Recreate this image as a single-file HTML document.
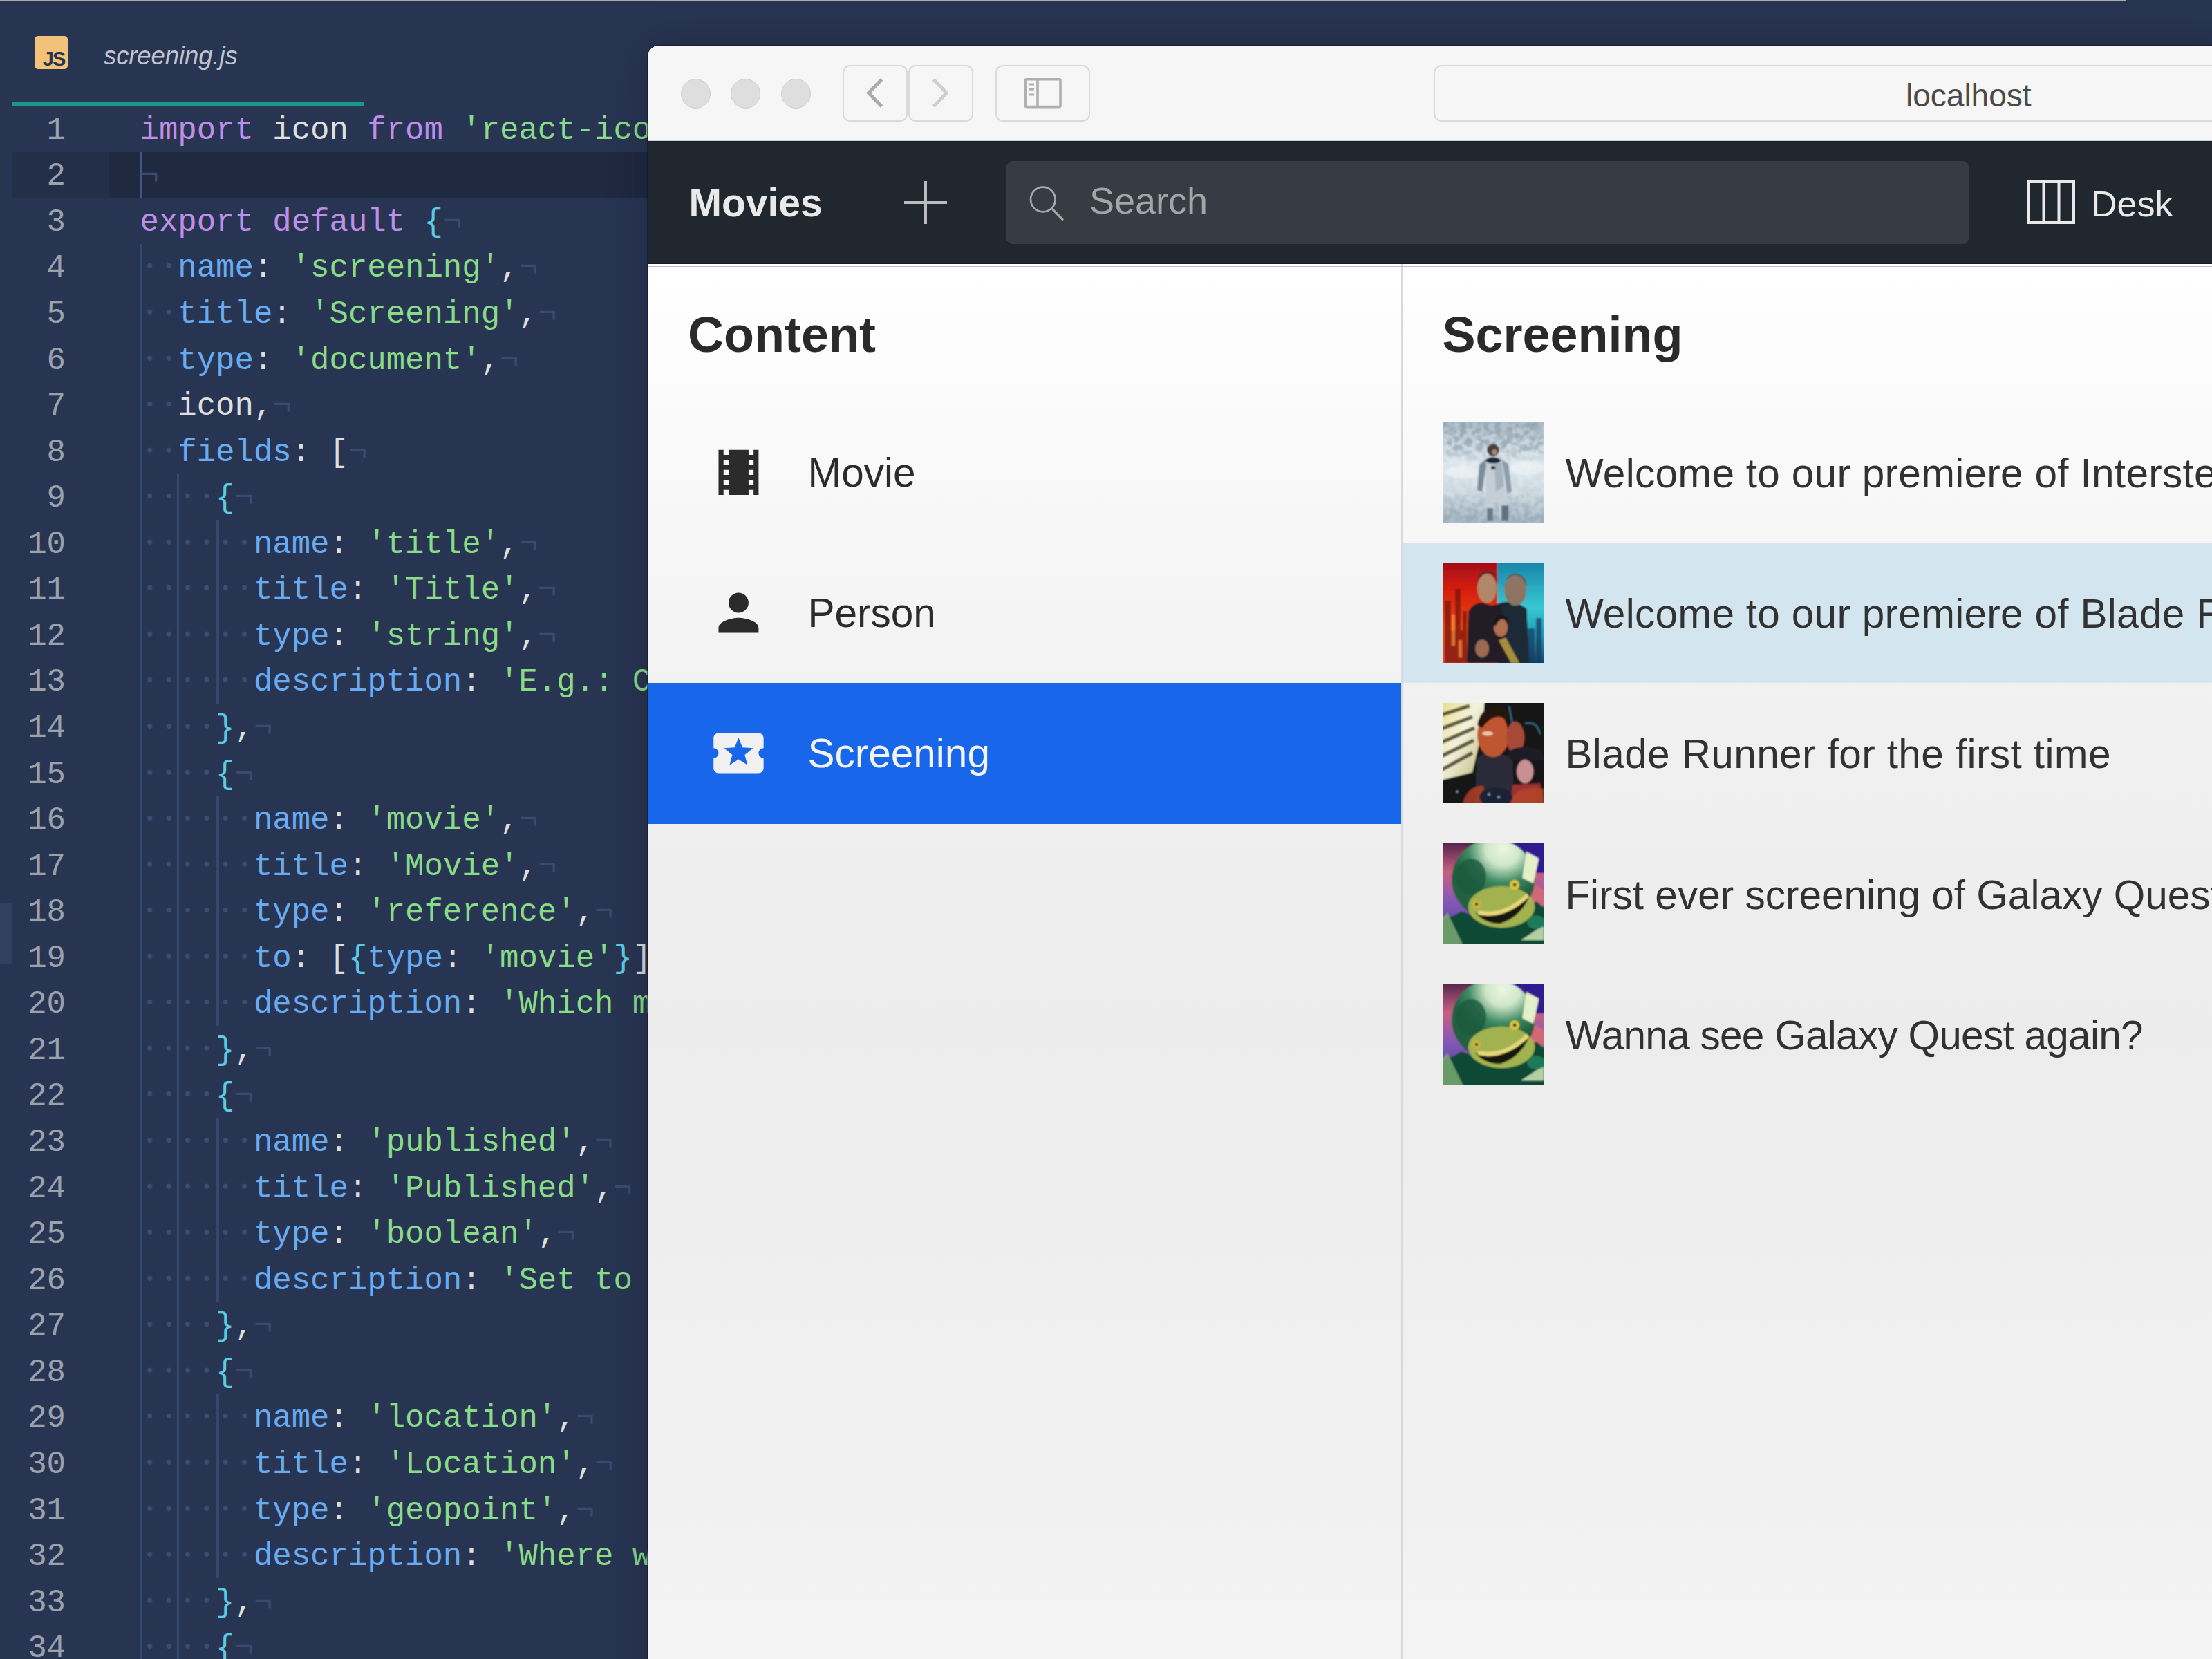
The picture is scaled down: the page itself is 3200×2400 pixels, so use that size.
<!DOCTYPE html>
<html><head><meta charset="utf-8">
<style>
html,body{margin:0;padding:0;}
body{width:3200px;height:2400px;overflow:hidden;position:relative;background:#283552;font-family:"Liberation Sans",sans-serif;}
.abs{position:absolute;}
#topstrip{position:absolute;left:0;top:0;width:3075px;height:1.2px;background:#a9abae;}
#jsicon{position:absolute;left:50px;top:52px;width:48px;height:48px;background:#f2c27b;border-radius:5px;}
#jsicon span{position:absolute;right:4.5px;bottom:0.5px;font:bold 29px/30px "Liberation Sans",sans-serif;color:#27344f;letter-spacing:-1.8px;}
#fname{position:absolute;left:150px;top:56px;font:italic 36.5px/50px "Liberation Sans",sans-serif;color:#bfc4ce;letter-spacing:-0.1px;}
#tabline{position:absolute;left:18px;top:147px;width:508px;height:7px;background:#18978a;}
#hl{position:absolute;left:18px;top:219.66px;width:920px;height:66.56px;background:#1f2940;}
#hlg{position:absolute;left:18px;top:219.66px;width:140px;height:66.56px;background:#232e47;}
#gmark{position:absolute;left:0;top:1306px;width:18px;height:89px;background:#323f5e;}
.ln{position:absolute;left:0;height:66.56px;width:940px;white-space:pre;}
.num{position:absolute;left:0;width:95px;text-align:right;font:45.66px/66.56px "Liberation Mono",monospace;color:#9aa1ad;}
.code{position:absolute;left:202.5px;font:45.66px/66.56px "Liberation Mono",monospace;color:#e6e6e6;}
.code i{font-style:normal;color:#3a4b70;}
.dots{position:absolute;left:0;top:0;height:66.56px;background:radial-gradient(circle at 13.7px 29.1px,#3a4d75 3.2px,rgba(58,77,117,0) 3.9px) 0 0/27.4px 66.56px repeat-x;}
.p{color:#c08de8;} .w{color:#dedede;} .g{color:#8adb88;} .b{color:#69abf0;} .c{color:#5ccbe2;}
.guide{position:absolute;width:3.4px;background:#35476c;}
#cursor{position:absolute;left:202.3px;top:219.66px;width:3px;height:66.56px;background:#3e5585;}
#editor{position:absolute;left:0;top:0;width:938px;height:2400px;overflow:hidden;}

#win{position:absolute;left:937px;top:65.5px;width:2300px;height:2400px;background:#f6f6f6;border-top-left-radius:16px;overflow:hidden;box-shadow:0 0 0 1px rgba(12,18,38,0.55),0 0 60px rgba(8,12,25,0.28);}
#toolbar{position:absolute;left:0;top:0;width:100%;height:137px;background:#f6f6f6;border-bottom:1.5px solid #d3d3d3;box-shadow:inset 0 1px 0 #ffffff;border-top-left-radius:16px;}
.tl{position:absolute;top:48px;width:41px;height:41px;border-radius:50%;background:#dedede;border:1px solid #cecece;}
.tbtn{position:absolute;top:28px;height:82px;border:2px solid #dadada;border-radius:11px;background:#f6f6f6;box-sizing:border-box;}
#url{position:absolute;left:1137px;top:28px;width:1300px;height:82px;border:2px solid #dadada;border-radius:12px;box-sizing:border-box;}
#url span{position:absolute;left:681px;top:19.5px;font:46px/46px "Liberation Sans",sans-serif;color:#4a4a4a;}
#nav{position:absolute;left:0;top:138.5px;width:100%;height:176px;background:#20272e;border-top:1px solid #141c22;border-bottom:1px solid #141c22;}
#movies{position:absolute;left:59.5px;top:56px;font:bold 57px/64px "Liberation Sans",sans-serif;color:#e9e9e9;}
#plus1{position:absolute;left:371px;top:85.6px;width:62px;height:4px;background:#babdbf;}
#plus2{position:absolute;left:400px;top:56.8px;width:3.8px;height:62px;background:#babdbf;}
#search{position:absolute;left:518px;top:28px;width:1394px;height:120px;background:#363c44;border-radius:11px;}
#search span{position:absolute;left:121px;top:25px;font:54px/64px "Liberation Sans",sans-serif;color:#a1a5a9;}
#desk{position:absolute;left:2088px;top:58px;font:52px/64px "Liberation Sans",sans-serif;color:#e9e9e9;}

#panels{position:absolute;left:0;top:316.5px;width:100%;height:2100px;}
#lp{position:absolute;left:0;top:0;width:1090px;height:2100px;background:linear-gradient(#ffffff 0px,#f0f0f0 700px,#ececec 1100px,#f3f3f3 2016px);}
#rp{position:absolute;left:1093.4px;top:0;width:1300px;height:2100px;background:linear-gradient(#ffffff 0px,#f0f0f0 700px,#ececec 1100px,#f3f3f3 2016px);}
#divider{position:absolute;left:1090px;top:0;width:3.4px;height:2100px;background:#d9d9d9;}
#shadowline{position:absolute;left:0;top:2.5px;width:100%;height:1.5px;background:#bdbdbd;}
.h1{position:absolute;top:62px;font:bold 72px/80px "Liberation Sans",sans-serif;color:#2a2a2a;}
.lrow,.rrow{position:absolute;left:0;width:100%;height:203.20px;}
.lrow.sel{background:#1867ea;}
.rrow.sel{background:#d3e5ef;}
.ico{position:absolute;left:87.7px;top:57.6px;width:86.9px;height:86.9px;fill:#2b2b2b;}
.sel .ico{fill:#f0f0f0;}
.ltext{position:absolute;left:231.5px;top:62px;font:58.5px/80px "Liberation Sans",sans-serif;color:#2c2c2c;white-space:nowrap;}
.sel .ltext{color:#f3f3f3;}
.thumb{position:absolute;left:57.5px;top:28.7px;width:145.2px;height:145.2px;overflow:hidden;}
.rtext{position:absolute;left:234px;top:63px;font:58.5px/80px "Liberation Sans",sans-serif;color:#323232;white-space:nowrap;}
.th1{background:linear-gradient(#c9d2da,#dfe5ea 40%,#b8c4cc);}
.th2{background:linear-gradient(90deg,#c0361c,#3a2a2a 45%,#1f5a6a 65%,#2aa0b8);}
.th3{background:linear-gradient(135deg,#e8d870,#3a3028 40%,#2a2020 70%,#c05030);}
.th4{background:linear-gradient(#6a5aa0,#6a9a60 40%,#404a30);}
</style></head><body>
<div id="editor">
<div id="topstrip"></div>
<div id="jsicon"><span>JS</span></div>
<div id="fname">screening.js</div>
<div id="tabline"></div>
<div id="hl"></div><div id="hlg"></div>
<div id="gmark"></div>
<div class="guide" style="left:202.3px;top:352.8px;height:2063.4px"></div><div class="guide" style="left:256.1px;top:685.6px;height:1730.6px"></div><div class="guide" style="left:313.2px;top:752.1px;height:266.2px"></div><div class="guide" style="left:313.2px;top:1151.5px;height:332.8px"></div><div class="guide" style="left:313.2px;top:1617.4px;height:266.2px"></div><div class="guide" style="left:313.2px;top:2016.8px;height:266.2px"></div>
<div id="cursor"></div>
<div class="ln" style="top:155.70px"><span class="num">1</span><span class="code"><span class="p">import</span><span class="w"> icon </span><span class="p">from</span><span class="w"> </span><span class="g">&#x27;react-icons/lib/md/local-movies&#x27;</span></span></div><div class="ln" style="top:222.26px"><span class="num">2</span><span class="code"><i class="e">¬</i></span></div><div class="ln" style="top:288.82px"><span class="num">3</span><span class="code"><span class="p">export</span><span class="w"> </span><span class="p">default</span><span class="w"> </span><span class="c">{</span><i class="e">¬</i></span></div><div class="ln" style="top:355.38px"><span class="num">4</span><span class="code"><i class="dots" style="width:54.80px"></i>  <span class="b">name</span><span class="w">: </span><span class="g">&#x27;screening&#x27;</span><span class="w">,</span><i class="e">¬</i></span></div><div class="ln" style="top:421.94px"><span class="num">5</span><span class="code"><i class="dots" style="width:54.80px"></i>  <span class="b">title</span><span class="w">: </span><span class="g">&#x27;Screening&#x27;</span><span class="w">,</span><i class="e">¬</i></span></div><div class="ln" style="top:488.50px"><span class="num">6</span><span class="code"><i class="dots" style="width:54.80px"></i>  <span class="b">type</span><span class="w">: </span><span class="g">&#x27;document&#x27;</span><span class="w">,</span><i class="e">¬</i></span></div><div class="ln" style="top:555.06px"><span class="num">7</span><span class="code"><i class="dots" style="width:54.80px"></i>  <span class="w">icon,</span><i class="e">¬</i></span></div><div class="ln" style="top:621.62px"><span class="num">8</span><span class="code"><i class="dots" style="width:54.80px"></i>  <span class="b">fields</span><span class="w">: [</span><i class="e">¬</i></span></div><div class="ln" style="top:688.18px"><span class="num">9</span><span class="code"><i class="dots" style="width:109.60px"></i>    <span class="c">{</span><i class="e">¬</i></span></div><div class="ln" style="top:754.74px"><span class="num">10</span><span class="code"><i class="dots" style="width:164.40px"></i>      <span class="b">name</span><span class="w">: </span><span class="g">&#x27;title&#x27;</span><span class="w">,</span><i class="e">¬</i></span></div><div class="ln" style="top:821.30px"><span class="num">11</span><span class="code"><i class="dots" style="width:164.40px"></i>      <span class="b">title</span><span class="w">: </span><span class="g">&#x27;Title&#x27;</span><span class="w">,</span><i class="e">¬</i></span></div><div class="ln" style="top:887.86px"><span class="num">12</span><span class="code"><i class="dots" style="width:164.40px"></i>      <span class="b">type</span><span class="w">: </span><span class="g">&#x27;string&#x27;</span><span class="w">,</span><i class="e">¬</i></span></div><div class="ln" style="top:954.42px"><span class="num">13</span><span class="code"><i class="dots" style="width:164.40px"></i>      <span class="b">description</span><span class="w">: </span><span class="g">&#x27;E.g.: Cinema night&#x27;</span><span class="w">,</span><i class="e">¬</i></span></div><div class="ln" style="top:1020.98px"><span class="num">14</span><span class="code"><i class="dots" style="width:109.60px"></i>    <span class="c">}</span><span class="w">,</span><i class="e">¬</i></span></div><div class="ln" style="top:1087.54px"><span class="num">15</span><span class="code"><i class="dots" style="width:109.60px"></i>    <span class="c">{</span><i class="e">¬</i></span></div><div class="ln" style="top:1154.10px"><span class="num">16</span><span class="code"><i class="dots" style="width:164.40px"></i>      <span class="b">name</span><span class="w">: </span><span class="g">&#x27;movie&#x27;</span><span class="w">,</span><i class="e">¬</i></span></div><div class="ln" style="top:1220.66px"><span class="num">17</span><span class="code"><i class="dots" style="width:164.40px"></i>      <span class="b">title</span><span class="w">: </span><span class="g">&#x27;Movie&#x27;</span><span class="w">,</span><i class="e">¬</i></span></div><div class="ln" style="top:1287.22px"><span class="num">18</span><span class="code"><i class="dots" style="width:164.40px"></i>      <span class="b">type</span><span class="w">: </span><span class="g">&#x27;reference&#x27;</span><span class="w">,</span><i class="e">¬</i></span></div><div class="ln" style="top:1353.78px"><span class="num">19</span><span class="code"><i class="dots" style="width:164.40px"></i>      <span class="b">to</span><span class="w">: [</span><span class="c">{</span><span class="b">type</span><span class="w">: </span><span class="g">&#x27;movie&#x27;</span><span class="c">}</span><span class="w">],</span><i class="e">¬</i></span></div><div class="ln" style="top:1420.34px"><span class="num">20</span><span class="code"><i class="dots" style="width:164.40px"></i>      <span class="b">description</span><span class="w">: </span><span class="g">&#x27;Which movie&#x27;</span><span class="w">,</span><i class="e">¬</i></span></div><div class="ln" style="top:1486.90px"><span class="num">21</span><span class="code"><i class="dots" style="width:109.60px"></i>    <span class="c">}</span><span class="w">,</span><i class="e">¬</i></span></div><div class="ln" style="top:1553.46px"><span class="num">22</span><span class="code"><i class="dots" style="width:109.60px"></i>    <span class="c">{</span><i class="e">¬</i></span></div><div class="ln" style="top:1620.02px"><span class="num">23</span><span class="code"><i class="dots" style="width:164.40px"></i>      <span class="b">name</span><span class="w">: </span><span class="g">&#x27;published&#x27;</span><span class="w">,</span><i class="e">¬</i></span></div><div class="ln" style="top:1686.58px"><span class="num">24</span><span class="code"><i class="dots" style="width:164.40px"></i>      <span class="b">title</span><span class="w">: </span><span class="g">&#x27;Published&#x27;</span><span class="w">,</span><i class="e">¬</i></span></div><div class="ln" style="top:1753.14px"><span class="num">25</span><span class="code"><i class="dots" style="width:164.40px"></i>      <span class="b">type</span><span class="w">: </span><span class="g">&#x27;boolean&#x27;</span><span class="w">,</span><i class="e">¬</i></span></div><div class="ln" style="top:1819.70px"><span class="num">26</span><span class="code"><i class="dots" style="width:164.40px"></i>      <span class="b">description</span><span class="w">: </span><span class="g">&#x27;Set to published&#x27;</span><span class="w">,</span><i class="e">¬</i></span></div><div class="ln" style="top:1886.26px"><span class="num">27</span><span class="code"><i class="dots" style="width:109.60px"></i>    <span class="c">}</span><span class="w">,</span><i class="e">¬</i></span></div><div class="ln" style="top:1952.82px"><span class="num">28</span><span class="code"><i class="dots" style="width:109.60px"></i>    <span class="c">{</span><i class="e">¬</i></span></div><div class="ln" style="top:2019.38px"><span class="num">29</span><span class="code"><i class="dots" style="width:164.40px"></i>      <span class="b">name</span><span class="w">: </span><span class="g">&#x27;location&#x27;</span><span class="w">,</span><i class="e">¬</i></span></div><div class="ln" style="top:2085.94px"><span class="num">30</span><span class="code"><i class="dots" style="width:164.40px"></i>      <span class="b">title</span><span class="w">: </span><span class="g">&#x27;Location&#x27;</span><span class="w">,</span><i class="e">¬</i></span></div><div class="ln" style="top:2152.50px"><span class="num">31</span><span class="code"><i class="dots" style="width:164.40px"></i>      <span class="b">type</span><span class="w">: </span><span class="g">&#x27;geopoint&#x27;</span><span class="w">,</span><i class="e">¬</i></span></div><div class="ln" style="top:2219.06px"><span class="num">32</span><span class="code"><i class="dots" style="width:164.40px"></i>      <span class="b">description</span><span class="w">: </span><span class="g">&#x27;Where will it be&#x27;</span><span class="w">,</span><i class="e">¬</i></span></div><div class="ln" style="top:2285.62px"><span class="num">33</span><span class="code"><i class="dots" style="width:109.60px"></i>    <span class="c">}</span><span class="w">,</span><i class="e">¬</i></span></div><div class="ln" style="top:2352.18px"><span class="num">34</span><span class="code"><i class="dots" style="width:109.60px"></i>    <span class="c">{</span><i class="e">¬</i></span></div>
</div>
<div id="topstrip2" style="position:absolute;left:938px;top:0;width:2137px;height:1.2px;background:#a9abae"></div>
<div id="win">
 <div id="toolbar">
  <div class="tl" style="left:48px"></div>
  <div class="tl" style="left:120px"></div>
  <div class="tl" style="left:193px"></div>
  <div class="tbtn" style="left:282px;width:94px"><svg width="94" height="81" viewBox="0 0 94 81" style="position:absolute;left:-4.5px;top:-3.8px"><path d="M58.5 23 L39.5 42.5 L58.5 62" fill="none" stroke="#ababab" stroke-width="5" stroke-linecap="butt" stroke-linejoin="miter"/></svg></div>
  <div class="tbtn" style="left:377px;width:94px"><svg width="94" height="81" viewBox="0 0 94 81" style="position:absolute;left:-4.5px;top:-3.8px"><path d="M38.5 23 L57.5 42.5 L38.5 62" fill="none" stroke="#cfcfcf" stroke-width="5" stroke-linecap="butt" stroke-linejoin="miter"/></svg></div>
  <div class="tbtn" style="left:503px;width:137px"><svg width="137" height="81" viewBox="0 0 137 81" style="position:absolute;left:-4.5px;top:-3.8px"><rect x="45.3" y="22.8" width="50.7" height="39.8" rx="1.5" fill="none" stroke="#b0b0b0" stroke-width="3.6"/><line x1="63" y1="22.8" x2="63" y2="62.6" stroke="#b0b0b0" stroke-width="3.6"/><line x1="50.8" y1="30" x2="58" y2="30" stroke="#b0b0b0" stroke-width="3"/><line x1="50.8" y1="37.3" x2="58" y2="37.3" stroke="#b0b0b0" stroke-width="3"/><line x1="50.8" y1="44.9" x2="58" y2="44.9" stroke="#b0b0b0" stroke-width="3"/></svg></div>
  <div id="url"><span>localhost</span></div>
 </div>
 <div id="nav">
  <div id="movies">Movies</div>
  <div id="plus1"></div><div id="plus2"></div>
  <div id="search"><svg width="110" height="120" style="position:absolute;left:0;top:0"><circle cx="53.8" cy="55.5" r="17.8" fill="none" stroke="#a5a8ab" stroke-width="2.7"/><line x1="66.5" y1="68.5" x2="82" y2="84.3" stroke="#a5a8ab" stroke-width="3.2" stroke-linecap="round"/></svg><span>Search</span></div>
  <svg style="position:absolute;left:1996px;top:56px" width="72" height="66"><rect x="2" y="2" width="65" height="59" fill="none" stroke="#e9e9e9" stroke-width="4"/><line x1="23.5" y1="2" x2="23.5" y2="61" stroke="#e9e9e9" stroke-width="4"/><line x1="45.5" y1="2" x2="45.5" y2="61" stroke="#e9e9e9" stroke-width="4"/></svg>
  <div id="desk">Desk</div>
 </div>
 <div id="panels">
  <div id="lp">
   <div class="h1" style="left:58px">Content</div>
   <div class="lrow" style="top:200.00px"><svg class="ico" viewBox="0 0 24 24"><path d="M18 3v2h-2V3H8v2H6V3H4v18h2v-2h2v2h8v-2h2v2h2V3h-2zM8 17H6v-2h2v2zm0-4H6v-2h2v2zm0-4H6V7h2v2zm10 8h-2v-2h2v2zm0-4h-2v-2h2v2zm0-4h-2V7h2v2z"/></svg><div class="ltext">Movie</div></div><div class="lrow" style="top:403.20px"><svg class="ico" viewBox="0 0 24 24"><path d="M12 12c2.21 0 4-1.79 4-4s-1.79-4-4-4-4 1.79-4 4 1.79 4 4 4zm0 2c-2.67 0-8 1.34-8 4v2h16v-2c0-2.66-5.33-4-8-4z"/></svg><div class="ltext">Person</div></div><div class="lrow sel" style="top:606.40px"><svg class="ico" viewBox="0 0 24 24"><path d="M20 12c0-1.1.9-2 2-2V6c0-1.1-.9-2-2-2H4c-1.1 0-1.99.9-1.99 2v4c1.1 0 1.99.9 1.99 2s-.89 2-2 2v4c0 1.1.9 2 2 2h16c1.1 0 2-.9 2-2v-4c-1.1 0-2-.9-2-2zm-4.42 4.8L12 14.5l-3.58 2.3 1.08-4.12-3.29-2.69 4.24-.25L12 5.8l1.54 3.95 4.24.25-3.29 2.69 1.09 4.11z"/></svg><div class="ltext">Screening</div></div>
  </div>
  <div id="divider"></div>
  <div id="rp">
   <div class="h1" style="left:56px">Screening</div>
   <div class="rrow" style="top:200.00px"><div class="thumb"><svg width="145.2" height="145.2" viewBox="0 0 145 145" preserveAspectRatio="none" style="position:absolute;left:0;top:0;display:block"><defs><filter id="bf1" x="-10%" y="-10%" width="120%" height="120%"><feGaussianBlur stdDeviation="0.9"/></filter><filter id="bf1n" x="0" y="0" width="100%" height="100%"><feTurbulence type="fractalNoise" baseFrequency="0.12" numOctaves="3" seed="4"/><feColorMatrix type="matrix" values="0 0 0 0 0.30  0 0 0 0 0.38  0 0 0 0 0.45  3.6 0 0 0 -1.3"/></filter></defs><g filter="url(#bf1)">
<defs><linearGradient id="i1g" x1="0" y1="0" x2="0" y2="1"><stop offset="0" stop-color="#a9b9c5"/><stop offset="0.2" stop-color="#c9d6de"/><stop offset="0.42" stop-color="#e3ecf1"/><stop offset="0.68" stop-color="#d4e0e7"/><stop offset="1" stop-color="#a7b8c3"/></linearGradient>
<linearGradient id="i1m" x1="0" y1="0" x2="0" y2="1"><stop offset="0" stop-color="#fff" stop-opacity="1"/><stop offset="0.25" stop-color="#fff" stop-opacity="0.8"/><stop offset="0.4" stop-color="#fff" stop-opacity="0.1"/><stop offset="0.65" stop-color="#fff" stop-opacity="0.15"/><stop offset="1" stop-color="#fff" stop-opacity="0.9"/></linearGradient>
<mask id="i1mask"><rect width="145" height="145" fill="url(#i1m)"/></mask></defs>
<rect x="-5" y="-5" width="155" height="155" fill="url(#i1g)"/>
<rect x="0" y="0" width="145" height="145" filter="url(#bf1n)" mask="url(#i1mask)"/>
<g fill="#f4f8fa" opacity="0.55"><ellipse cx="28" cy="72" rx="24" ry="9"/><ellipse cx="120" cy="66" rx="24" ry="10"/></g>
<path d="M61 52 Q72 47 84 52 L94 60 L99 100 L92 103 L88 72 L88 96 L94 140 L83 142 L76 104 L72 140 L62 141 L62 96 L60 74 L56 100 L49 98 L52 61 Z" fill="#c3ced6"/>
<path d="M61 54 L52 61 L49 98 L56 100 L60 74 L62 62 Z" fill="#7b8b98"/>
<path d="M84 54 L94 60 L99 100 L92 103 L88 72 L86 62 Z" fill="#8e9dab"/>
<path d="M74 60 L84 58 L88 92 L76 100 Z" fill="#a6b4bf"/>
<rect x="63" y="124" width="9" height="18" fill="#6c7c8a"/><rect x="84" y="120" width="10" height="22" fill="#617282"/>
<ellipse cx="72" cy="40" rx="9" ry="9" fill="#4a4039"/>
<ellipse cx="74" cy="43" rx="3.5" ry="4" fill="#a88a7c"/>
<ellipse cx="72" cy="55" rx="11" ry="4.5" fill="#1f2a38"/>
<rect x="69" y="63" width="6" height="5" fill="#2c3846"/>
</g></svg></div><div class="rtext" style="letter-spacing:0.3px">Welcome to our premiere of Interstellar</div></div><div class="rrow sel" style="top:403.20px"><div class="thumb"><svg width="145.2" height="145.2" viewBox="0 0 145 145" preserveAspectRatio="none" style="position:absolute;left:0;top:0;display:block"><defs><filter id="bf2" x="-10%" y="-10%" width="120%" height="120%"><feGaussianBlur stdDeviation="1.1"/></filter><filter id="bf2n" x="0" y="0" width="100%" height="100%"><feTurbulence type="fractalNoise" baseFrequency="0.12" numOctaves="3" seed="4"/><feColorMatrix type="matrix" values="0 0 0 0 0.30  0 0 0 0 0.38  0 0 0 0 0.45  3.6 0 0 0 -1.3"/></filter></defs><g filter="url(#bf2)">
<defs><linearGradient id="b2l" x1="0" y1="0" x2="0" y2="1"><stop offset="0" stop-color="#9e0a18"/><stop offset="0.3" stop-color="#d8200f"/><stop offset="0.65" stop-color="#ea4a14"/><stop offset="1" stop-color="#e0501c"/></linearGradient>
<linearGradient id="b2r" x1="0" y1="0" x2="0" y2="1"><stop offset="0" stop-color="#1680a8"/><stop offset="0.45" stop-color="#38c8d2"/><stop offset="0.72" stop-color="#2296b6"/><stop offset="1" stop-color="#0e3a66"/></linearGradient></defs>
<rect x="-5" y="-5" width="88" height="155" fill="url(#b2l)"/>
<rect x="78" y="-5" width="72" height="155" fill="url(#b2r)"/>
<g fill="#7a1410" opacity="0.75"><rect x="2" y="55" width="9" height="90"/><rect x="17" y="38" width="8" height="107"/><rect x="8" y="98" width="20" height="47"/><rect x="28" y="70" width="6" height="75"/></g>
<g fill="#f89040" opacity="0.7"><rect x="12" y="75" width="5" height="45"/><rect x="22" y="112" width="5" height="25"/></g>
<g fill="#123a5a" opacity="0.7"><rect x="122" y="95" width="10" height="50"/><rect x="134" y="80" width="8" height="65"/></g>
<path d="M34 145 L36 72 Q42 58 56 58 L70 62 L84 58 Q102 54 120 66 L124 145 Z" fill="#221e28"/>
<path d="M84 62 Q102 56 120 66 L124 145 L96 145 Z" fill="#1c2a38"/>
<ellipse cx="63" cy="37" rx="14" ry="21" fill="#b08868"/>
<path d="M48 32 Q50 12 64 12 Q78 12 79 30 L76 20 Q63 8 50 24 Z" fill="#3a2a20"/>
<ellipse cx="104" cy="40" rx="16" ry="22" fill="#8c7462"/>
<path d="M87 36 Q90 16 104 16 Q119 17 121 34 L114 22 Q102 12 90 26 Z" fill="#5a4a40"/>
<ellipse cx="83" cy="94" rx="10" ry="13" fill="#b07050"/>
<path d="M72 88 Q76 74 86 76 Q96 78 94 90 L90 82 Q82 78 75 92 Z" fill="#1a1418"/>
<ellipse cx="56" cy="124" rx="10" ry="13" fill="#9a6a52"/>
<path d="M80 112 L90 108 L110 145 L98 145 Z" fill="#c0a040" opacity="0.85"/>
</g></svg></div><div class="rtext" style="letter-spacing:0.3px">Welcome to our premiere of Blade Runner 2049</div></div><div class="rrow" style="top:606.40px"><div class="thumb"><svg width="145.2" height="145.2" viewBox="0 0 145 145" preserveAspectRatio="none" style="position:absolute;left:0;top:0;display:block"><defs><filter id="bf3" x="-10%" y="-10%" width="120%" height="120%"><feGaussianBlur stdDeviation="1.0"/></filter><filter id="bf3n" x="0" y="0" width="100%" height="100%"><feTurbulence type="fractalNoise" baseFrequency="0.12" numOctaves="3" seed="4"/><feColorMatrix type="matrix" values="0 0 0 0 0.30  0 0 0 0 0.38  0 0 0 0 0.45  3.6 0 0 0 -1.3"/></filter></defs><g filter="url(#bf3)">
<defs><linearGradient id="b3y" x1="0" y1="0" x2="1" y2="1"><stop offset="0" stop-color="#e6de88"/><stop offset="0.45" stop-color="#f4f2dc"/><stop offset="1" stop-color="#b8b478"/></linearGradient></defs>
<rect x="-5" y="-5" width="155" height="155" fill="#131318"/>
<path d="M-5 -5 L60 -5 L56 40 L42 100 L-5 112 Z" fill="url(#b3y)"/>
<g stroke="#4a4228" stroke-width="5.5" opacity="0.85"><line x1="-5" y1="18" x2="38" y2="4"/><line x1="-5" y1="38" x2="42" y2="20"/><line x1="-5" y1="58" x2="45" y2="36"/><line x1="-5" y1="78" x2="44" y2="54"/><line x1="-5" y1="98" x2="42" y2="72"/></g>
<path d="M46 145 L48 84 Q52 70 72 72 L100 78 L102 145 Z" fill="#2c2c38"/>
<ellipse cx="72" cy="46" rx="23" ry="32" fill="#c05530"/>
<path d="M49 32 Q54 4 80 6 Q100 10 94 40 L88 22 Q72 14 56 36 Z" fill="#24180f"/>
<ellipse cx="64" cy="44" rx="8" ry="3" fill="#e8c8a8"/>
<ellipse cx="104" cy="50" rx="13" ry="23" fill="#a84a38"/>
<g stroke="#3a7a98" stroke-width="2.5" fill="none" opacity="0.8"><path d="M95 5 L100 30"/><path d="M118 30 Q135 25 140 45"/></g>
<path d="M94 70 Q112 58 142 68 L145 82 L96 82 Z" fill="#1c1c28"/>
<ellipse cx="118" cy="99" rx="12" ry="17" fill="#c89090"/>
<path d="M100 118 L140 116 L145 145 L98 145 Z" fill="#9a3030"/>
<path d="M28 145 Q36 118 58 120 L62 145 Z" fill="#b84424" opacity="0.8"/><path d="M96 145 Q104 118 145 124 L145 145 Z" fill="#b84a2a" opacity="0.75"/>
<ellipse cx="76" cy="136" rx="24" ry="14" fill="#1c2434"/>
<g fill="#9ac8e8" opacity="0.8"><circle cx="66" cy="132" r="1.8"/><circle cx="80" cy="136" r="1.8"/><circle cx="20" cy="128" r="1.5"/></g>
</g></svg></div><div class="rtext" style="letter-spacing:0.4px">Blade Runner for the first time</div></div><div class="rrow" style="top:809.60px"><div class="thumb"><svg width="145.2" height="145.2" viewBox="0 0 145 145" preserveAspectRatio="none" style="position:absolute;left:0;top:0;display:block"><defs><filter id="bf43" x="-10%" y="-10%" width="120%" height="120%"><feGaussianBlur stdDeviation="1.0"/></filter><filter id="bf43n" x="0" y="0" width="100%" height="100%"><feTurbulence type="fractalNoise" baseFrequency="0.12" numOctaves="3" seed="4"/><feColorMatrix type="matrix" values="0 0 0 0 0.30  0 0 0 0 0.38  0 0 0 0 0.45  3.6 0 0 0 -1.3"/></filter></defs><g filter="url(#bf43)">
<defs><linearGradient id="g4b" x1="0" y1="0" x2="0" y2="1"><stop offset="0" stop-color="#4a2048"/><stop offset="0.3" stop-color="#c86080"/><stop offset="0.58" stop-color="#8458b8"/><stop offset="1" stop-color="#3c3a88"/></linearGradient>
<radialGradient id="g4h" cx="0.62" cy="0.12" r="0.6"><stop offset="0" stop-color="#eef6e4"/><stop offset="0.35" stop-color="#cfe6c8"/><stop offset="0.7" stop-color="#3e8a64"/><stop offset="1" stop-color="#23603f"/></radialGradient></defs>
<rect x="-5" y="-5" width="155" height="155" fill="url(#g4b)"/>
<rect x="98" y="-5" width="52" height="48" fill="#2e1e90"/>
<ellipse cx="126" cy="78" rx="24" ry="18" fill="#d06878"/>
<path d="M-5 118 Q10 100 30 104 L40 145 L-5 145 Z" fill="#0e4432"/>
<ellipse cx="72" cy="52" rx="60" ry="58" fill="url(#g4h)"/>
<ellipse cx="40" cy="48" rx="22" ry="26" fill="#1c5a3e" opacity="0.8"/>
<path d="M120 12 L138 22 L130 58 L114 50 Z" fill="#e4f0c8"/>
<path d="M-5 116 L26 98 Q84 122 134 84 L150 96 L150 150 L-5 150 Z" fill="#0f4a36"/>
<ellipse cx="84" cy="92" rx="48" ry="30" fill="#a2b250"/>
<path d="M46 100 Q88 116 126 72 Q114 106 82 116 Q60 116 46 100 Z" fill="#141408"/>
<path d="M50 100 Q88 108 122 75" stroke="#e6d878" stroke-width="6" fill="none"/>
<circle cx="103" cy="60" r="7" fill="#dcc640"/><circle cx="103" cy="60" r="2.4" fill="#1a1a08"/>
<circle cx="48" cy="88" r="6" fill="#ccb840"/><circle cx="48" cy="88" r="2.1" fill="#1a1a08"/>
<path d="M6 100 L30 150 L-5 150 L-5 112 Z" fill="#7aa870" opacity="0.85"/>
<path d="M112 140 L145 118 L145 140 Z" fill="#d0e8b8" opacity="0.85"/>
<ellipse cx="134" cy="114" rx="13" ry="10" fill="#1e7a58"/>
</g></svg></div><div class="rtext" style="letter-spacing:0px">First ever screening of Galaxy Quest</div></div><div class="rrow" style="top:1012.80px"><div class="thumb"><svg width="145.2" height="145.2" viewBox="0 0 145 145" preserveAspectRatio="none" style="position:absolute;left:0;top:0;display:block"><defs><filter id="bf44" x="-10%" y="-10%" width="120%" height="120%"><feGaussianBlur stdDeviation="1.0"/></filter><filter id="bf44n" x="0" y="0" width="100%" height="100%"><feTurbulence type="fractalNoise" baseFrequency="0.12" numOctaves="3" seed="4"/><feColorMatrix type="matrix" values="0 0 0 0 0.30  0 0 0 0 0.38  0 0 0 0 0.45  3.6 0 0 0 -1.3"/></filter></defs><g filter="url(#bf44)">
<defs><linearGradient id="g4b" x1="0" y1="0" x2="0" y2="1"><stop offset="0" stop-color="#4a2048"/><stop offset="0.3" stop-color="#c86080"/><stop offset="0.58" stop-color="#8458b8"/><stop offset="1" stop-color="#3c3a88"/></linearGradient>
<radialGradient id="g4h" cx="0.62" cy="0.12" r="0.6"><stop offset="0" stop-color="#eef6e4"/><stop offset="0.35" stop-color="#cfe6c8"/><stop offset="0.7" stop-color="#3e8a64"/><stop offset="1" stop-color="#23603f"/></radialGradient></defs>
<rect x="-5" y="-5" width="155" height="155" fill="url(#g4b)"/>
<rect x="98" y="-5" width="52" height="48" fill="#2e1e90"/>
<ellipse cx="126" cy="78" rx="24" ry="18" fill="#d06878"/>
<path d="M-5 118 Q10 100 30 104 L40 145 L-5 145 Z" fill="#0e4432"/>
<ellipse cx="72" cy="52" rx="60" ry="58" fill="url(#g4h)"/>
<ellipse cx="40" cy="48" rx="22" ry="26" fill="#1c5a3e" opacity="0.8"/>
<path d="M120 12 L138 22 L130 58 L114 50 Z" fill="#e4f0c8"/>
<path d="M-5 116 L26 98 Q84 122 134 84 L150 96 L150 150 L-5 150 Z" fill="#0f4a36"/>
<ellipse cx="84" cy="92" rx="48" ry="30" fill="#a2b250"/>
<path d="M46 100 Q88 116 126 72 Q114 106 82 116 Q60 116 46 100 Z" fill="#141408"/>
<path d="M50 100 Q88 108 122 75" stroke="#e6d878" stroke-width="6" fill="none"/>
<circle cx="103" cy="60" r="7" fill="#dcc640"/><circle cx="103" cy="60" r="2.4" fill="#1a1a08"/>
<circle cx="48" cy="88" r="6" fill="#ccb840"/><circle cx="48" cy="88" r="2.1" fill="#1a1a08"/>
<path d="M6 100 L30 150 L-5 150 L-5 112 Z" fill="#7aa870" opacity="0.85"/>
<path d="M112 140 L145 118 L145 140 Z" fill="#d0e8b8" opacity="0.85"/>
<ellipse cx="134" cy="114" rx="13" ry="10" fill="#1e7a58"/>
</g></svg></div><div class="rtext" style="letter-spacing:-0.72px">Wanna see Galaxy Quest again?</div></div>
  </div>
  <div id="shadowline"></div>
 </div>
</div>
</body></html>
